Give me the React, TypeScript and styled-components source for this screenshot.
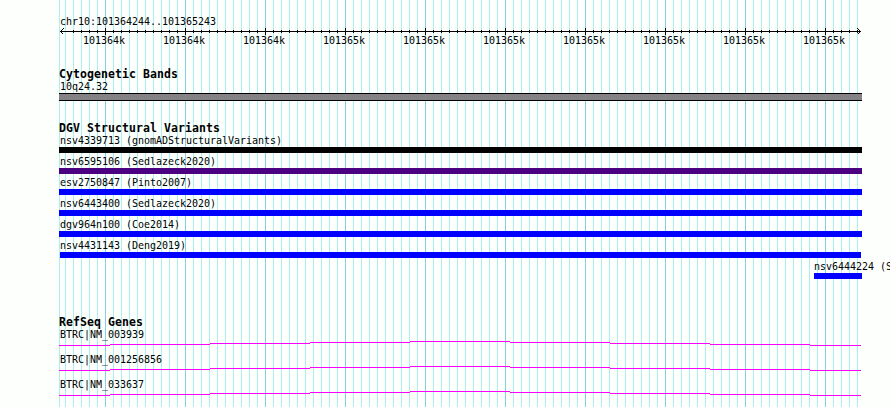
import styled, { createGlobalStyle, css } from 'styled-components'

interface Variant {
  name: string
  color: string
  start: number
  end: number
}

const MAJOR_STEP = 80
const LEFT = 59

const ticks = ['101364k', '101364k', '101364k', '101365k', '101365k', '101365k', '101365k', '101365k', '101365k', '101365k']

const variants: Variant[] = [
  { name: 'nsv4339713 (gnomADStructuralVariants)', color: '#000', start: 0, end: 803 },
  { name: 'nsv6595106 (Sedlazeck2020)', color: '#4b0082', start: 0, end: 803 },
  { name: 'esv2750847 (Pinto2007)', color: '#00f', start: 0, end: 803 },
  { name: 'nsv6443400 (Sedlazeck2020)', color: '#00f', start: 0, end: 803 },
  { name: 'dgv964n100 (Coe2014)', color: '#00f', start: 0, end: 803 },
  { name: 'nsv4431143 (Deng2019)', color: '#00f', start: 1, end: 802 },
  { name: 'nsv6444224 (S', color: '#00f', start: 755, end: 803 },
]

const genes = ['BTRC|NM_003939', 'BTRC|NM_001256856', 'BTRC|NM_033637']

// [x from, x to, y] of each step in an intron line
const steps = [
  [0, 51, 3],
  [51, 151, 2],
  [151, 251, 1],
  [251, 351, 0],
  [351, 451, -1],
  [451, 551, 0],
  [551, 651, 1],
  [651, 751, 2],
  [751, 802, 3],
]

const GlobalStyle = createGlobalStyle`
  body {
    margin: 0;
    background: #fdfffc;
    overflow: hidden;
  }
`

const Browser = styled.main`
  position: relative;
  box-sizing: border-box;
  width: 890px;
  height: 407px;
  padding: 15px 0 0 ${LEFT}px;
  overflow: hidden;
  color: #000;
  font-family: 'DejaVu Sans Mono', 'Liberation Mono', monospace;
`

const Grid = styled.svg`
  position: absolute;
  inset: 0;
  z-index: -1;
`

const label = css`
  display: block;
  font-size: 10px;
  letter-spacing: -0.02px;
  line-height: 14px;
  white-space: pre;
  transform: scaleY(1.1);
`

const Label = styled.span<{ $start?: number }>`
  ${label}
  height: 12px;
  margin-left: ${({ $start = 0 }) => Math.max(1, $start)}px;
`

const Ruler = styled.header`
  height: 53px;
`

const Axis = styled.svg`
  display: block;
  margin-top: 1px;
`

const TickLabels = styled.div`
  display: flex;
  margin: -1px 0 0 5px;
`

const TickLabel = styled.span`
  ${label}
  flex: 0 0 ${MAJOR_STEP}px;
  text-align: center;
`

const Section = styled.section<{ $height: number }>`
  height: ${({ $height }) => $height}px;
`

const Title = styled.h2`
  margin: 0;
  height: 12px;
  font-size: 11.5px;
  font-weight: bold;
  line-height: 12px;
  letter-spacing: 0.077px;
  white-space: pre;
`

const Band = styled.div`
  box-sizing: border-box;
  width: 803px;
  height: 8px;
  margin-top: 1px;
  border: solid #000;
  border-width: 1px 0;
  background: #848284;
`

const Row = styled.div`
  height: 21px;
`

const Bar = styled.div<{ $variant: Variant }>`
  width: ${({ $variant }) => $variant.end - $variant.start}px;
  height: 6px;
  margin: 1px 0 0 ${({ $variant }) => $variant.start}px;
  background: ${({ $variant }) => $variant.color};
`

const GeneRow = styled.div`
  height: 25px;
`

const Intron = styled.svg`
  display: block;
  overflow: visible;
`

const GridLines = () => (
  <Grid width="890" height="407" shapeRendering="crispEdges">
    <rect x={LEFT} width="1" height="407" fill="#afeeee" />
    {Array.from({ length: 100 }, (_, i) => (
      <rect
        key={i}
        x={65 + i * 8}
        width="1"
        height="407"
        fill={i % 10 === 5 ? '#87ceeb' : '#afeeee'}
      />
    ))}
  </Grid>
)

const Scale = () => (
  <Axis width="803" height="7" shapeRendering="crispEdges">
    <rect x="1" y="3" width="801" height="1" />
    {Array.from({ length: 99 }, (_, i) => {
      const major = i % 10 === 4
      return (
        <rect key={i} x={14 + i * 8} y={major ? 0 : 2} width="1" height={major ? 7 : 3} />
      )
    })}
    <path d="M4.5 0.5 L1.5 3.5 L4.5 6.5 M798.5 0.5 L801.5 3.5 L798.5 6.5" fill="none" stroke="#000" />
  </Axis>
)

const App = () => (
  <>
    <GlobalStyle />
    <Browser>
      <GridLines />
      <Ruler>
        <Label>chr10:101364244..101365243</Label>
        <Scale />
        <TickLabels>
          {ticks.map((tick, i) => (
            <TickLabel key={i}>{tick}</TickLabel>
          ))}
        </TickLabels>
      </Ruler>
      <Section $height={54}>
        <Title>Cytogenetic Bands</Title>
        <Label>10q24.32</Label>
        <Band />
      </Section>
      <Section $height={194}>
        <Title>DGV Structural Variants</Title>
        {variants.map(variant => (
          <Row key={variant.name}>
            <Label $start={variant.start}>{variant.name}</Label>
            <Bar $variant={variant} />
          </Row>
        ))}
      </Section>
      <Section $height={90}>
        <Title>RefSeq Genes</Title>
        {genes.map(gene => (
          <GeneRow key={gene}>
            <Label>{gene}</Label>
            <Intron width="803" height="5" shapeRendering="crispEdges">
              {steps.map(([from, to, y]) => (
                <rect key={from} x={from} y={y + 2} width={to - from} height="1" fill="#f0f" />
              ))}
            </Intron>
          </GeneRow>
        ))}
      </Section>
    </Browser>
  </>
)

export default App
